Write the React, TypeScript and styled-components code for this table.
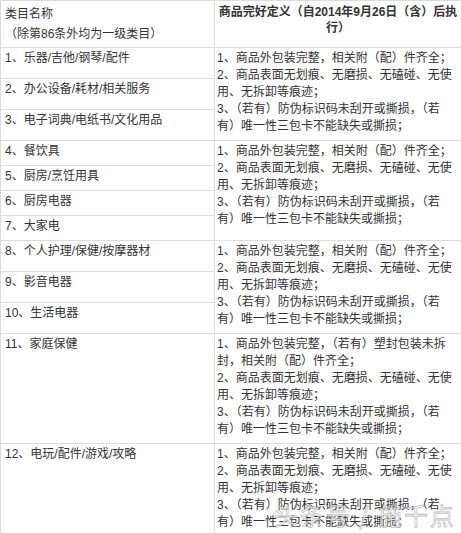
import React from 'react';
import styled, {createGlobalStyle} from 'styled-components';

const GlobalStyle = createGlobalStyle`
  html, body {
    margin: 0;
    padding: 0;
    background: #fff;
  }
  body {
    font-family: "Liberation Sans", "Noto Sans CJK SC", sans-serif;
    color: #333;
  }
`;

const Page = styled.div`
  position: relative;
  width: 461px;
  height: 533px;
  overflow: hidden;
  background: #fff;
`;

const Table = styled.table`
  width: 462px;
  border-collapse: collapse;
  table-layout: fixed;
  font-size: 12px;
  line-height: 17px;
`;

const Cell = styled.td<{$right?: boolean}>`
  border: 1px solid #dcdcdc;
  vertical-align: top;
  padding: ${(p) => (p.$right ? '2px 3px 5px 2px' : '2px 4px 5px 4px')};
  text-align: left;
  white-space: nowrap;
  overflow: hidden;
`;

const HeadCell = styled.th<{$right?: boolean}>`
  border: 1px solid #dcdcdc;
  vertical-align: top;
  padding: ${(p) => (p.$right ? '3px 2px 3px 2px' : '3px 4px 3px 4px')};
  font-weight: ${(p) => (p.$right ? 700 : 400)};
  text-align: ${(p) => (p.$right ? 'center' : 'left')};
  line-height: ${(p) => (p.$right ? '16px' : '20px')};
  white-space: nowrap;
  color: #333;
`;

const Line = styled.div``;

// faint watermark stamped over the bottom-right corner
const Watermark = styled.div`
  position: absolute;
  right: 5px;
  bottom: 1px;
  font-size: 24px;
  letter-spacing: 2px;
  color: rgba(255, 255, 255, 0.75);
  -webkit-text-stroke: 0.8px rgba(110, 110, 110, 0.45);
  font-family: "Noto Sans CJK SC", sans-serif;
  pointer-events: none;
`;

const STANDARD = [
  '1、商品外包装完整，相关附（配）件齐全；',
  '2、商品表面无划痕、无磨损、无磕碰、无使',
  '用、无拆卸等痕迹；',
  '3、（若有）防伪标识码未刮开或撕损，（若',
  '有）唯一性三包卡不能缺失或撕损；'
];

const SEALED = [
  '1、商品外包装完整，（若有）塑封包装未拆',
  '封，相关附（配）件齐全；',
  '2、商品表面无划痕、无磨损、无磕碰、无使',
  '用、无拆卸等痕迹；',
  '3、（若有）防伪标识码未刮开或撕损，（若',
  '有）唯一性三包卡不能缺失或撕损；'
];

interface IGroup {
  items: string[];
  rules: string[];
}

const GROUPS: IGroup[] = [
  {items: ['1、乐器/吉他/钢琴/配件', '2、办公设备/耗材/相关服务', '3、电子词典/电纸书/文化用品'], rules: STANDARD},
  {items: ['4、餐饮具', '5、厨房/烹饪用具', '6、厨房电器', '7、大家电'], rules: STANDARD},
  {items: ['8、个人护理/保健/按摩器材', '9、影音电器', '10、生活电器'], rules: STANDARD},
  {items: ['11、家庭保健'], rules: SEALED},
  {items: ['12、电玩/配件/游戏/攻略'], rules: STANDARD}
];

const App = () => {
  return (
    <Page>
      <GlobalStyle />
      <Table>
        <colgroup>
          <col style={{width: 214}} />
          <col />
        </colgroup>
        <thead>
          <tr>
            <HeadCell>
              <Line>类目名称</Line>
              <Line>（除第86条外均为一级类目）</Line>
            </HeadCell>
            <HeadCell $right>
              <Line>商品完好定义（自2014年9月26日（含）后执</Line>
              <Line>行）</Line>
            </HeadCell>
          </tr>
        </thead>
        <tbody>
          {GROUPS.map((group) =>
            group.items.map((item, i) => (
              <tr key={item}>
                <Cell>{item}</Cell>
                {i === 0 && (
                  <Cell $right rowSpan={group.items.length}>
                    {group.rules.map((rule) => (
                      <Line key={rule}>{rule}</Line>
                    ))}
                  </Cell>
                )}
              </tr>
            ))
          )}
        </tbody>
      </Table>
      <Watermark>头条号 / 施千点</Watermark>
    </Page>
  );
};

export default App;
